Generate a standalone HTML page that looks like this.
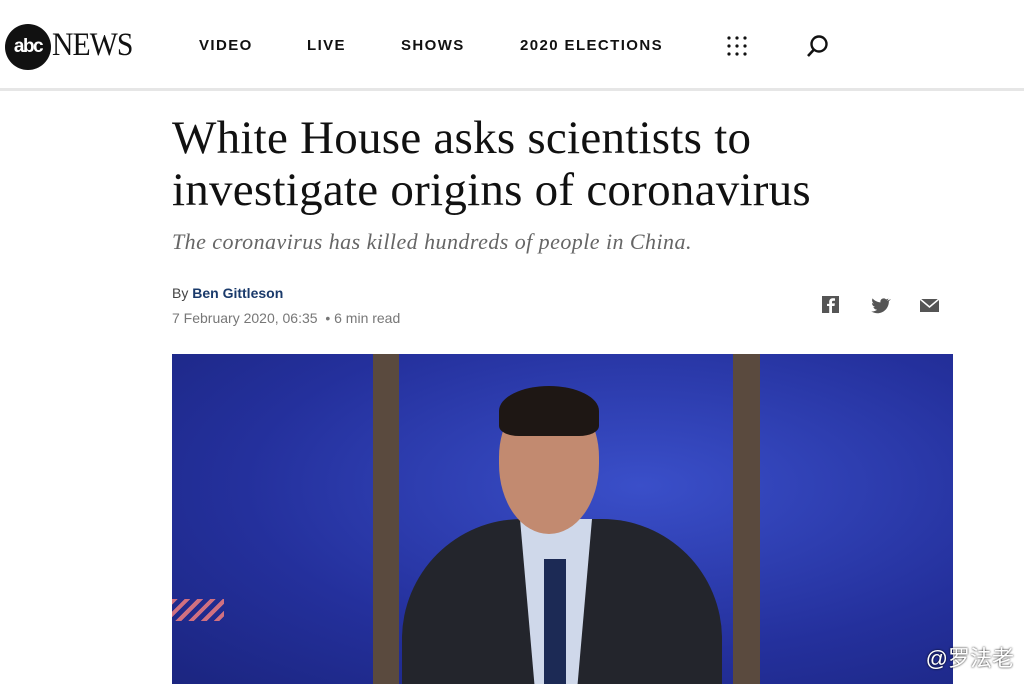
<!DOCTYPE html>
<html><head><style>
body{margin:0;width:1024px;height:684px;overflow:hidden;background:#fff;font-family:"Liberation Sans",sans-serif;position:relative}
.hdr{position:absolute;left:0;top:0;width:1024px;height:88px;background:#fff;border-bottom:3px solid #e6e6e6}
.logo{position:absolute;left:5px;top:24px;width:46px;height:46px;border-radius:50%;background:#111;color:#fff;font-weight:bold;font-size:19px;line-height:46px;text-align:center;letter-spacing:-1.5px}
.news{position:absolute;left:52px;top:27px;font-family:"Liberation Serif",serif;font-size:33px;color:#111;letter-spacing:-1px;transform:scaleX(.9);transform-origin:left}
.nav{position:absolute;top:37px;font-size:15px;letter-spacing:1.4px;color:#111;font-weight:bold}
h1{position:absolute;left:172px;top:112px;margin:0;font-family:"Liberation Serif",serif;font-weight:normal;font-size:47px;line-height:52px;color:#111;letter-spacing:0.25px;white-space:nowrap}
.sub{position:absolute;left:172px;top:229px;font-family:"Liberation Serif",serif;font-style:italic;font-size:22px;color:#666;letter-spacing:0.45px}
.by{position:absolute;left:172px;top:285px;font-size:14px;color:#444}
.by b{color:#1a3a6b}
.date{position:absolute;left:172px;top:310px;font-size:14px;color:#777}
.img{position:absolute;left:172px;top:354px;width:781px;height:330px;overflow:hidden;background:radial-gradient(ellipse at 60% 40%,#3a4fc9,#24309c 60%,#1b2580)}
</style></head><body>
<div class="hdr">
<div class="logo">abc</div><div class="news">NEWS</div>
<div class="nav" style="left:199px">VIDEO</div>
<div class="nav" style="left:307px">LIVE</div>
<div class="nav" style="left:401px">SHOWS</div>
<div class="nav" style="left:520px">2020 ELECTIONS</div>
<svg style="position:absolute;left:727px;top:36px" width="20" height="20"><g fill="#111"><circle cx="2" cy="2" r="1.6"/><circle cx="10" cy="2" r="1.6"/><circle cx="18" cy="2" r="1.6"/><circle cx="2" cy="10" r="1.6"/><circle cx="10" cy="10" r="1.6"/><circle cx="18" cy="10" r="1.6"/><circle cx="2" cy="18" r="1.6"/><circle cx="10" cy="18" r="1.6"/><circle cx="18" cy="18" r="1.6"/></g></svg>
<svg style="position:absolute;left:806px;top:34px" width="24" height="24"><circle cx="13" cy="10" r="7.5" fill="none" stroke="#111" stroke-width="2.4"/><line x1="8" y1="15.5" x2="2" y2="22" stroke="#111" stroke-width="2.6"/></svg>
</div>
<h1>White House asks scientists to<br>investigate origins of coronavirus</h1>
<div class="sub">The coronavirus has killed hundreds of people in China.</div>
<div class="by">By <b>Ben Gittleson</b></div>
<div class="date">7 February 2020, 06:35 &nbsp;• 6 min read</div>
<svg style="position:absolute;left:822px;top:296px" width="120" height="20">
<path d="M0 0h17v17H0z" fill="#555"/><path d="M10 17v-7h2.5l.4-2.6H10V6c0-.8.3-1.3 1.4-1.3H13V2.4c-.3 0-1.2-.1-2.2-.1-2.2 0-3.6 1.3-3.6 3.7v1.9H5V10h2.2v7z" fill="#fff"/>
<path d="M67 4c-.7.3-1.4.5-2.2.6.8-.5 1.4-1.2 1.7-2.1-.7.4-1.6.8-2.4.9-1.6-1.7-4.6-1.2-5.5 1-.2.7-.3 1.3-.1 2-3.2-.2-6-1.7-7.9-4-1 1.8-.5 4 1.2 5.1-.6 0-1.2-.2-1.8-.5 0 1.9 1.3 3.5 3.2 3.9-.6.2-1.2.2-1.8.1.5 1.6 2 2.7 3.7 2.7-1.6 1.3-3.7 1.900-5.8 1.700 7.700 4.900 17.600-.500 17.600-10.300.800-.600 1.500-1.300 2-2.100z" fill="#555"/>
<path d="M98 3h19v13H98z" fill="#555"/><path d="M98 3l9.5 8 9.5-8" fill="none" stroke="#fff" stroke-width="1.5"/>
</svg>
<div class="img">
<div style="position:absolute;left:201px;top:0;width:26px;height:330px;background:#5a4a3e"></div>
<div style="position:absolute;left:561px;top:0;width:27px;height:330px;background:#5a4a3e"></div>
<div style="position:absolute;left:0;top:245px;width:52px;height:22px;background:repeating-linear-gradient(135deg,#d07080 0 4px,transparent 4px 9px)"></div>
<div style="position:absolute;left:230px;top:165px;width:320px;height:165px;border-radius:120px 120px 0 0;background:#23252c"></div>
<div style="position:absolute;left:348px;top:165px;width:72px;height:165px;background:#cfd8ea;clip-path:polygon(0 0,100% 0,80% 100%,20% 100%)"></div>
<div style="position:absolute;left:372px;top:205px;width:22px;height:125px;background:#1c2a55"></div>
<div style="position:absolute;left:327px;top:40px;width:100px;height:140px;border-radius:45% 45% 50% 50%;background:#c28a70"></div>
<div style="position:absolute;left:327px;top:32px;width:100px;height:50px;border-radius:50% 50% 20% 20%;background:#1e1714"></div>
</div>
<div style="position:absolute;right:10px;top:644px;line-height:30px;font-family:'Liberation Sans','Noto Sans CJK SC',sans-serif;font-size:22px;color:#fff;text-shadow:0 0 2px #000">@罗法老</div>
</body></html>
